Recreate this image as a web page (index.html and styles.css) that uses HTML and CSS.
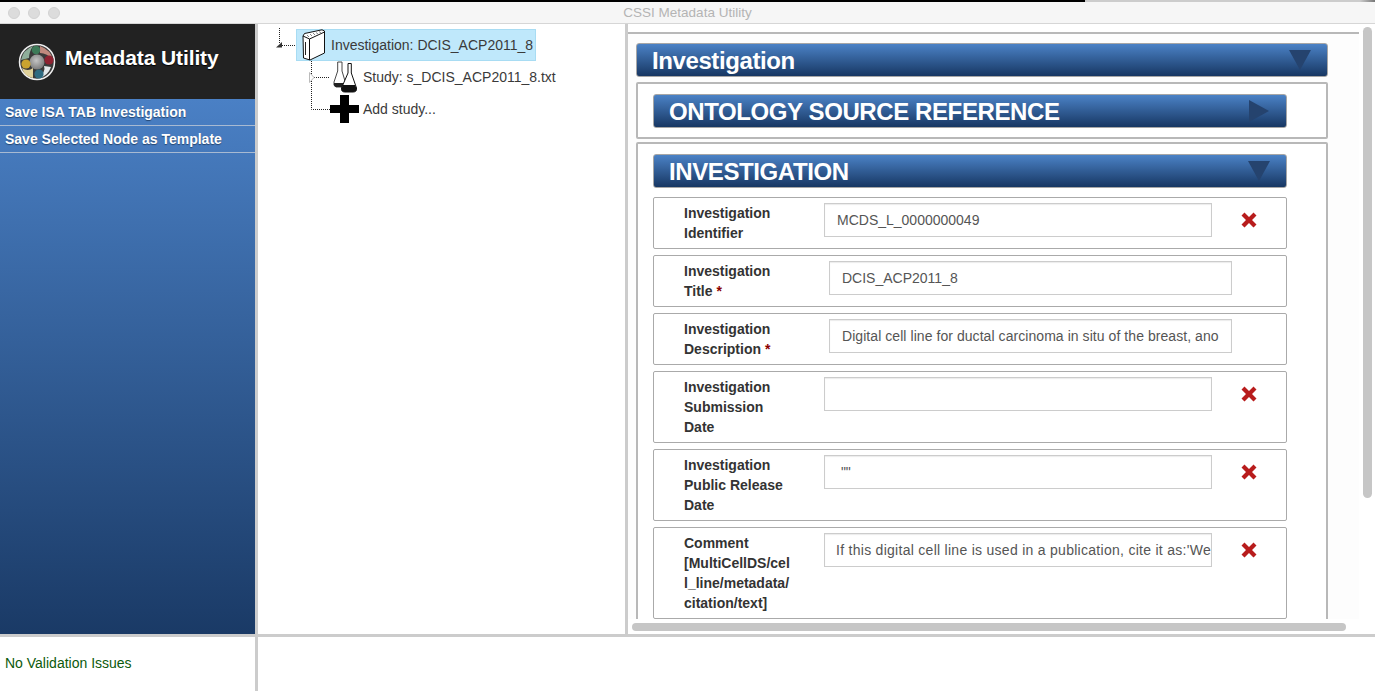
FILE: index.html
```html
<!DOCTYPE html>
<html>
<head>
  <title>CSSI Metadata Utility</title>
  <link rel="stylesheet" href="styles.css">
</head>
<body>
  <div class="edge"></div>
  <div class="titlebar">
    <div class="lights"><span></span><span></span><span></span></div>
    <div class="window-title">CSSI Metadata Utility</div>
  </div>

  <div class="main">
    <div class="sidebar">
      <div class="brand">
        <svg class="logo" width="38" height="38" viewBox="0 0 38 38">
          <defs>
            <radialGradient id="ball" cx="45%" cy="40%" r="60%">
              <stop offset="0" stop-color="#c4c4c4"/>
              <stop offset="1" stop-color="#7c7c7c"/>
            </radialGradient>
          </defs>
          <circle cx="19" cy="19" r="17.5" fill="#3a3a3a" stroke="#eee" stroke-width="1.5"/>
          <path d="M22 3 Q33 7 35 17 Q29 10 22 10Z" fill="#c08a7e"/>
          <path d="M33 24 Q30 33 21 35 Q28 28 26 23Z" fill="#e4e9eb"/>
          <path d="M15 35 Q6 33 4 25 Q10 29 15 25Z" fill="#e0d29a"/>
          <path d="M3 17 Q5 7 15 3 Q11 9 11 15Z" fill="#8fae9a"/>
          <circle cx="19" cy="19" r="7.5" fill="url(#ball)"/>
          <circle cx="18" cy="7" r="4.2" fill="#3d7a58"/>
          <circle cx="31" cy="17" r="4.6" fill="#8e2231"/>
          <circle cx="8" cy="21" r="4.6" fill="#c9a32f"/>
          <circle cx="21" cy="31" r="4.6" fill="#2f6a80"/>
        </svg>
        <span class="brand-name">Metadata Utility</span>
      </div>
      <div class="menu-item">Save ISA TAB Investigation</div>
      <div class="menu-item">Save Selected Node as Template</div>
    </div>

    <div class="tree">
      <svg class="tree-lines" width="72" height="100" viewBox="0 0 72 100">
        <g fill="none" stroke="#222" stroke-dasharray="1 1">
          <path d="M21.5 4V20"/>
          <path d="M24 21.5H38"/>
          <path d="M53.5 37V85.5H72"/>
          <path d="M56 53.5H72"/>
        </g>
        <path d="M18 23.5L24 18V23.5Z" fill="#333"/>
        <path d="M51.5 48.5L56 53.5L51.5 58.5Z" fill="#fff" stroke="#bbb"/>
      </svg>
      <div class="node node-selected">
        <svg class="node-icon" width="24" height="32" viewBox="0 0 24 32">
          <path d="M1 7L2.500 4.500L20 0.800L22.500 2V24L8 31L1.500 29Z" fill="#fff" stroke="#111" stroke-linejoin="round"/>
          <path d="M1 7L7.500 10V31" fill="none" stroke="#111"/>
          <path d="M7.500 10L22.500 3" fill="none" stroke="#111"/>
          <path d="M5 6L7 8M8 5L10 7M11 4L13 6M14 3.500L16 5M17 2.500L19 4" stroke="#666" fill="none" stroke-width="0.8"/>
          <path d="M3.500 13V26" stroke="#222" fill="none"/>
        </svg>
        <span>Investigation: DCIS_ACP2011_8</span>
      </div>
      <div class="node node-study">
        <svg class="node-icon" width="24" height="32" viewBox="0 0 24 32">
          <path d="M4.700 1H9V10L12 20L10 26H3Q0 25 1 21L4.700 10Z" fill="#fff" stroke="#333" stroke-width="0.9"/>
          <path d="M1 22L11 22L10 26H3Q0.500 25.500 1 22Z" fill="#222"/>
          <path d="M15 2.500H18.300V12L23.500 27Q24 31 20 31H12Q8 31 8.500 27L15 12Z" fill="#fff" stroke="#111"/>
          <path d="M10 24H22L23.500 27Q24 31 20 31H12Q8 31 8.500 27Z" fill="#111"/>
        </svg>
        <span>Study: s_DCIS_ACP2011_8.txt</span>
      </div>
      <div class="node node-add">
        <svg class="node-icon" width="29" height="28" viewBox="0 0 29 28">
          <path d="M10 0H19V10H29V18H19V28H10V18H0V10H10Z" fill="#000"/>
        </svg>
        <span>Add study...</span>
      </div>
    </div>

    <div class="detail">
      <div class="detail-view">
        <div class="panel-header panel-header-main">
          <span class="panel-title">Investigation</span>
          <i class="arrow-down"></i>
        </div>

        <div class="section">
          <div class="panel-header">
            <span class="panel-title">ONTOLOGY SOURCE REFERENCE</span>
            <i class="arrow-right"></i>
          </div>
        </div>

        <div class="section section-open">
          <div class="panel-header">
            <span class="panel-title">INVESTIGATION</span>
            <i class="arrow-down"></i>
          </div>

          <div class="row">
            <label class="row-label">Investigation Identifier</label>
            <input class="row-input" type="text" value="MCDS_L_0000000049">
            <svg class="remove" width="16" height="16" viewBox="0 0 16 16"><path d="M3.500 0.500L8 5L12.500 0.500L15.500 3.500L11 8L15.500 12.500L12.500 15.500L8 11L3.500 15.500L0.500 12.500L5 8L0.500 3.500Z" fill="#b81c1c"/></svg>
          </div>
          <div class="row">
            <label class="row-label">Investigation<br>Title <b class="req">*</b></label>
            <input class="row-input row-input-wide" type="text" value="DCIS_ACP2011_8">
          </div>
          <div class="row">
            <label class="row-label">Investigation<br>Description <b class="req">*</b></label>
            <input class="row-input row-input-wide row-input-desc" type="text" value="Digital cell line for ductal carcinoma in situ of the breast, ano">
          </div>
          <div class="row">
            <label class="row-label">Investigation Submission Date</label>
            <input class="row-input" type="text" value="">
            <svg class="remove" width="16" height="16" viewBox="0 0 16 16"><path d="M3.500 0.500L8 5L12.500 0.500L15.500 3.500L11 8L15.500 12.500L12.500 15.500L8 11L3.500 15.500L0.500 12.500L5 8L0.500 3.500Z" fill="#b81c1c"/></svg>
          </div>
          <div class="row">
            <label class="row-label">Investigation Public Release Date</label>
            <input class="row-input" type="text" value=" &quot;&quot;">
            <svg class="remove" width="16" height="16" viewBox="0 0 16 16"><path d="M3.500 0.500L8 5L12.500 0.500L15.500 3.500L11 8L15.500 12.500L12.500 15.500L8 11L3.500 15.500L0.500 12.500L5 8L0.500 3.500Z" fill="#b81c1c"/></svg>
          </div>
          <div class="row">
            <label class="row-label">Comment [MultiCellDS/cel l_line/metadata/ citation/text]</label>
            <input class="row-input row-input-citation" type="text" value="If this digital cell line is used in a publication, cite it as:'We">
            <svg class="remove" width="16" height="16" viewBox="0 0 16 16"><path d="M3.500 0.500L8 5L12.500 0.500L15.500 3.500L11 8L15.500 12.500L12.500 15.500L8 11L3.500 15.500L0.500 12.500L5 8L0.500 3.500Z" fill="#b81c1c"/></svg>
          </div>
        </div>
      </div>
      <div class="scroll-v"></div>
      <div class="scroll-h"></div>
    </div>
  </div>

  <div class="bottom">
    <div class="validation">No Validation Issues</div>
    <div class="console"></div>
  </div>
</body>
</html>
```

FILE: styles.css
```css
html, body {
  height: 100%;
}
body {
  margin: 0;
  height: 691px;
  overflow: hidden;
  background: #fff;
  font-family: "Liberation Sans", Arial, sans-serif;
  display: flex;
  flex-direction: column;
}

/* window chrome */
.edge {
  height: 2px;
  background: linear-gradient(to right, #000 0, #000 1085px, #ccc 1085px, #ccc 1360px, #777 1375px);
}
.titlebar {
  height: 21px;
  background: #f6f6f6;
  border-bottom: 1px solid #d6d6d6;
  display: flex;
  align-items: center;
  position: relative;
}
.lights {
  display: flex;
  gap: 8px;
  padding-left: 8px;
}
.lights span {
  width: 12px;
  height: 12px;
  border-radius: 50%;
  background: #dcdcdc;
  border: 1px solid #d2d2d2;
  box-sizing: border-box;
}
.window-title {
  position: absolute;
  left: 0;
  right: 0;
  text-align: center;
  font-size: 13.5px;
  color: #b4b4b4;
}

.main {
  height: 610px;
  display: flex;
}

/* left column */
.sidebar {
  width: 258px;
  flex: none;
  box-sizing: border-box;
  border-right: 3px solid #ccc;
  background: linear-gradient(to bottom, #4a80c5 75px, #1a3a66 100%);
}
.brand {
  height: 75px;
  background: #222;
  display: flex;
  align-items: center;
  padding-left: 18px;
  box-sizing: border-box;
}
.logo {
  flex: none;
}
.brand-name {
  margin-left: 9px;
  margin-top: -8px;
  color: #fff;
  font-size: 21px;
  font-weight: bold;
  letter-spacing: -0.1px;
  text-shadow: 0 1px 1px #000;
}
.menu-item {
  height: 26px;
  line-height: 26px;
  padding-left: 5px;
  border-bottom: 1px solid #a8bad2;
  color: #fff;
  font-size: 14px;
  font-weight: bold;
  text-shadow: 0 1px 1px #24456f;
}

/* tree */
.tree {
  width: 367px;
  flex: none;
  box-sizing: border-box;
  padding-top: 5px;
  background: #fff;
  position: relative;
  font-size: 14px;
  color: #3a3a3a;
}
.tree-lines {
  position: absolute;
  left: 0;
  top: 0;
}
.node {
  height: 32px;
  display: flex;
  align-items: center;
  position: relative;
}
.node-icon {
  flex: none;
}
.node-selected {
  width: 240px;
  margin-left: 38px;
  box-sizing: border-box;
  background: #bfe8fb;
  border: 1px solid #a8dcf3;
  padding-left: 5px;
}
.node-selected span {
  margin-left: 5px;
}
.node-study {
  margin-left: 75px;
}
.node-study span {
  margin-left: 6px;
}
.node-add {
  margin-left: 72px;
}
.node-add span {
  margin-left: 4px;
}

/* right column */
.detail {
  border-left: 3px solid #ccc;
  flex: 1;
  position: relative;
  background: #fff;
}
.detail-view {
  width: 731px;
  height: 587px;
  margin-top: 8px;
  overflow: hidden;
  background: #fdfdfd;
  box-sizing: border-box;
  border-top: 2px solid #b8b8b8;
  padding: 9px 0 0 8px;
}
.panel-header {
  width: 634px;
  height: 34px;
  box-sizing: border-box;
  border: 1px solid #a6a6a6;
  border-radius: 3px;
  background: linear-gradient(to bottom, #4b82c6, #173763);
  color: #fff;
  font-size: 24px;
  font-weight: bold;
  letter-spacing: -0.4px;
  display: flex;
  align-items: center;
  justify-content: space-between;
  padding-left: 15px;
  padding-right: 16px;
}
.panel-title {
  padding-top: 2px;
}
.panel-header-main {
  width: 692px;
  margin-bottom: 5px;
}
.arrow-down {
  width: 0;
  height: 0;
  border-left: 11px solid transparent;
  border-right: 11px solid transparent;
  border-top: 20px solid #25436e;
}
.arrow-right {
  width: 0;
  height: 0;
  border-top: 11px solid transparent;
  border-bottom: 11px solid transparent;
  border-left: 20px solid #25436e;
  margin-right: 1px;
}
.section {
  width: 692px;
  box-sizing: border-box;
  border: 2px solid #b8b8b8;
  border-radius: 2px;
  padding: 10px 39px 9px 15px;
  margin-bottom: 3px;
  background: #fff;
}
.section-open .panel-header {
  margin-bottom: 9px;
}
.row {
  width: 634px;
  box-sizing: border-box;
  border: 1px solid #aaa;
  border-radius: 2px;
  background: #fff;
  padding: 5px 0;
  margin-bottom: 6px;
  display: flex;
  align-items: flex-start;
}
.row-label {
  width: 110px;
  margin: 0 30px;
  flex: none;
  font-size: 14px;
  font-weight: bold;
  line-height: 20px;
  color: #333;
}
.req {
  color: #8b0000;
}
.row-input {
  width: 388px;
  height: 34px;
  box-sizing: border-box;
  margin: 0;
  border: 1px solid #ccc;
  border-radius: 0;
  box-shadow: inset 0 1px 1px rgba(0, 0, 0, 0.08);
  padding: 0 12px;
  font-family: inherit;
  font-size: 14px;
  color: #555;
  background: #fff;
  outline: none;
}
.row-input-wide {
  width: 403px;
  margin-left: 5px;
}
.row-input-desc {
  letter-spacing: 0.06px;
}
.row-input-citation {
  padding: 0 0 0 11px;
  letter-spacing: 0.28px;
}
.remove {
  flex: none;
  margin-left: 29px;
  margin-top: 9px;
}

/* scrollbars sit over the pane */
.scroll-v {
  position: absolute;
  top: 3px;
  left: 735px;
  width: 9px;
  height: 471px;
  border-radius: 5px;
  background: #c6c6c6;
}
.scroll-h {
  position: absolute;
  top: 599px;
  left: 4px;
  width: 714px;
  height: 8px;
  border-radius: 4px;
  background: #c6c6c6;
}

/* bottom strip */
.bottom {
  height: 57px;
  border-top: 3px solid #ccc;
  box-sizing: border-box;
  display: flex;
}
.validation {
  width: 250px;
  flex: none;
  border-right: 3px solid #ccc;
  padding-left: 5px;
  line-height: 52px;
  font-size: 14px;
  color: #0b5a0b;
}
.console {
  flex: 1;
}
```
